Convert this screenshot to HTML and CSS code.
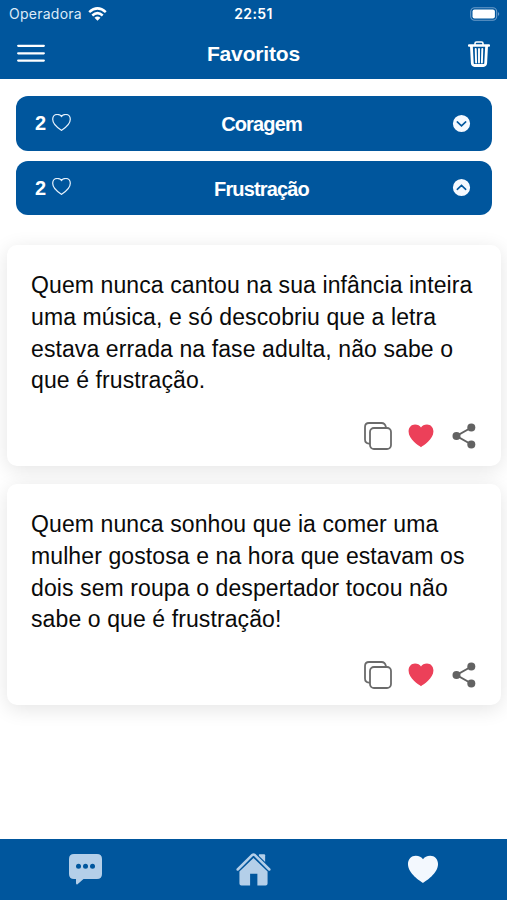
FILE: index.html
```html
<!DOCTYPE html>
<html lang="pt-BR">
<head>
<meta charset="utf-8">
<title>Favoritos</title>
<link rel="stylesheet" href="styles.css">
</head>
<body>
<svg class="defs" width="0" height="0" aria-hidden="true">
  <symbol id="heart" viewBox="0 0 30 28"><path d="M15 27C12.500 25.400 0.500 18 0.500 8.800C0.500 4 3.800 0.700 8 0.700C11.200 0.700 13.700 2 15 4C16.300 2 18.800 0.700 22 0.700C26.200 0.700 29.500 4 29.500 8.800C29.500 18 17.500 25.400 15 27Z"/></symbol>
  <symbol id="copy" viewBox="0 0 28 28"><path d="M6 21.700H5Q1 21.200 1 17.500V5Q1 1 5 1H17.500Q21 1 21.900 5V6" /><rect x="6" y="6" width="21" height="21" rx="4"/></symbol>
  <symbol id="share" viewBox="0 0 24 26"><path d="M19.500 4.500L4.500 13L19.500 21.500" fill="none" stroke="currentColor" stroke-width="2"/><g fill="currentColor"><circle cx="19.300" cy="4.500" r="4"/><circle cx="4.500" cy="13" r="4"/><circle cx="19.300" cy="21.500" r="4"/></g></symbol>
</svg>
<div class="screen">
  <header class="top">
    <div class="status">
      <div class="carrier"><span>Operadora</span>
        <svg width="19" height="14" viewBox="0 0 19 14" fill="none" stroke="#fff" stroke-width="2.500"><path d="M1.200 5.200Q9.500-2.400 17.800 5.200M4.300 8.500Q9.500 3.800 14.700 8.500"/><path d="M9.500 13.700L6.500 10.700Q9.500 8.200 12.500 10.700Z" fill="#fff" stroke="none"/></svg>
      </div>
      <time>22:51</time>
      <svg class="battery" width="30" height="14" viewBox="0 0 30 14"><rect x=".7" y=".7" width="26" height="12.600" rx="4" fill="none" stroke="#6b9cc9" stroke-width="1.100"/><rect x="2.500" y="2.500" width="22.400" height="9" rx="2" fill="#fff"/><path d="M28 5Q30.500 7 28 9Z" fill="#6b9cc9"/></svg>
    </div>
    <div class="nav">
      <svg class="menu" width="28" height="19" viewBox="0 0 28 19" stroke="#fff" stroke-width="2.300" stroke-linecap="round"><path d="M1.200 1.800H26.800M1.200 9.300H26.800M1.200 16.600H26.800"/></svg>
      <h1>Favoritos</h1>
      <svg class="trash" width="22" height="26" viewBox="0 0 22 26" fill="none" stroke="#fff"><path d="M1 4.500H21" stroke-width="2.400" stroke-linecap="round"/><path d="M7 4V2.500Q7 1 8.500 1H13.500Q15 1 15 2.500V4" stroke-width="1.600"/><path d="M3.400 5L4.300 22Q4.500 24.500 6.500 24.500H15.500Q17.500 24.500 17.700 22L18.600 5" stroke-width="2.800"/><path d="M7.700 8L8.100 21.500M11 8V21.500M14.300 8L13.900 21.500" stroke-width="1.900" stroke-linecap="round"/></svg>
    </div>
  </header>
  <main>
    <section class="groups">
      <div class="group"><div class="count">2 <svg width="19" height="17"><use href="#heart"/></svg></div><h2>Coragem</h2><svg class="toggle" width="19" height="19" viewBox="0 0 18 18"><circle cx="9" cy="9" r="8.900" fill="#f5f9ff"/><path d="M5 7.500L9 11.200L13 7.500"/></svg></div>
      <div class="group"><div class="count">2 <svg width="19" height="17"><use href="#heart"/></svg></div><h2>Frustração</h2><svg class="toggle" width="19" height="19" viewBox="0 0 18 18"><circle cx="9" cy="9" r="8.900" fill="#f5f9ff"/><path d="M5 10.700L9 7L13 10.700"/></svg></div>
    </section>
    <section class="cards">
      <article class="card">
        <p>Quem nunca cantou na sua infância inteira<br>uma música, e só descobriu que a letra<br>estava errada na fase adulta, não sabe o<br>que é frustração.</p>
        <div class="actions"><svg class="copy" width="28" height="28"><use href="#copy"/></svg><svg class="like" width="26" height="24"><use href="#heart"/></svg><svg class="share" width="24" height="26"><use href="#share"/></svg></div>
      </article>
      <article class="card">
        <p>Quem nunca sonhou que ia comer uma<br>mulher gostosa e na hora que estavam os<br>dois sem roupa o despertador tocou não<br>sabe o que é frustração!</p>
        <div class="actions"><svg class="copy" width="28" height="28"><use href="#copy"/></svg><svg class="like" width="26" height="24"><use href="#heart"/></svg><svg class="share" width="24" height="26"><use href="#share"/></svg></div>
      </article>
    </section>
  </main>
  <footer class="tabs">
    <div><svg width="33" height="31" viewBox="0 0 33 31"><path d="M5 0H28Q33 0 33 5V20Q33 25 28 25H14.500L8.500 30.300Q7 31 7 29V25H5Q0 25 0 20V5Q0 0 5 0Z" fill="#b4cfe9"/><g fill="#00569d"><circle cx="9.500" cy="12.300" r="2.500"/><circle cx="16.500" cy="12.300" r="2.500"/><circle cx="23.500" cy="12.300" r="2.500"/></g></svg></div>
    <div><svg width="35" height="33" viewBox="0 0 36 34"><path d="M23.500 2Q23.500 1.300 24.200 1.300H29Q30 1.300 30 2.300V13L23.500 6Z" fill="#b4cfe9"/><path d="M1.700 17L16.800 2Q18 1 19.200 2L34.300 17" fill="none" stroke="#00569d" stroke-width="5"/><path d="M1.700 17L16.800 2Q18 1 19.200 2L34.300 17" fill="none" stroke="#b4cfe9" stroke-width="2.600" stroke-linecap="round"/><path d="M18 5.200L32.500 19V31.500Q32.500 33.500 30.500 33.500H22V21.500H14.500V33.500H5.500Q3.500 33.500 3.500 31.500V19Z" fill="#b4cfe9"/></svg></div>
    <div><svg class="active" width="32" height="29"><use href="#heart"/></svg></div>
  </footer>
</div>
</body>
</html>
```
FILE: styles.css
```css
* { box-sizing: border-box; }
body { margin: 0; background: #fff; font-family: "Liberation Sans", Arial, sans-serif; }
h1, h2, p { margin: 0; }
svg { display: block; flex: none; }
.defs { position: absolute; }
.screen { height: 900px; display: flex; flex-direction: column; overflow: hidden; }
.top { height: 79px; background: #00569d; color: #fff; flex: none; }
.status { height: 27px; display: grid; grid-template-columns: 1fr auto 1fr; align-items: center; padding: 0 7px 0 9px; font: 14px/27px Inter, sans-serif; }
.carrier { display: flex; gap: 6px; align-items: center; color: #dcebf8; letter-spacing: .25px; }
.status time { font-weight: 600; letter-spacing: .35px; margin-left: -2px; }
.battery { justify-self: end; }
.nav { height: 52px; display: grid; grid-template-columns: 1fr auto 1fr; align-items: center; padding: 0 17px; }
.nav h1 { font-size: 21px; line-height: 52px; letter-spacing: -.15px; padding-top: 1px; }
.trash { justify-self: end; }
main { flex: 1; }
.groups { padding: 17px 15px 0 16px; display: flex; flex-direction: column; gap: 10px; }
.group { height: 54.500px; border-radius: 12px; background: #00569d; color: #fff; display: grid; grid-template-columns: 1fr auto 1fr; align-items: center; padding: 0 21px 0 19px; }
.group h2 { font-size: 20px; line-height: 28px; letter-spacing: -.85px; padding: 2px 0 0 17px; }
.count { display: flex; align-items: center; gap: 6px; font-size: 20px; font-weight: bold; padding-top: 1px; }
.count svg { fill: none; stroke: #e5f1fc; stroke-width: 2; overflow: visible; margin-top: -3px; }
.toggle { justify-self: end; fill: none; stroke: #00569d; stroke-width: 1.500; stroke-linecap: round; }
.cards { padding: 30px 6px 0 7px; display: flex; flex-direction: column; gap: 18px; }
.card { height: 221px; border-radius: 10px; background: #fff; box-shadow: 0 4px 20px rgba(0,0,0,.11); padding: 25px 25px 0 24px; }
.card p { font-size: 23px; line-height: 31.800px; color: #0a0a0a; white-space: nowrap; letter-spacing: .1px; }
.actions { display: flex; justify-content: flex-end; align-items: center; gap: 16px; padding-top: 25px; color: #626262; }
.copy { fill: none; stroke: #6b6b6b; stroke-width: 1.800; }
.like { fill: #ec4059; margin-right: 2px; }
.tabs { height: 61px; background: #00569d; flex: none; display: grid; grid-template-columns: repeat(3, 1fr); justify-items: center; align-items: center; padding-left: 1px; }
.active { fill: #f3f8fe; }
```
